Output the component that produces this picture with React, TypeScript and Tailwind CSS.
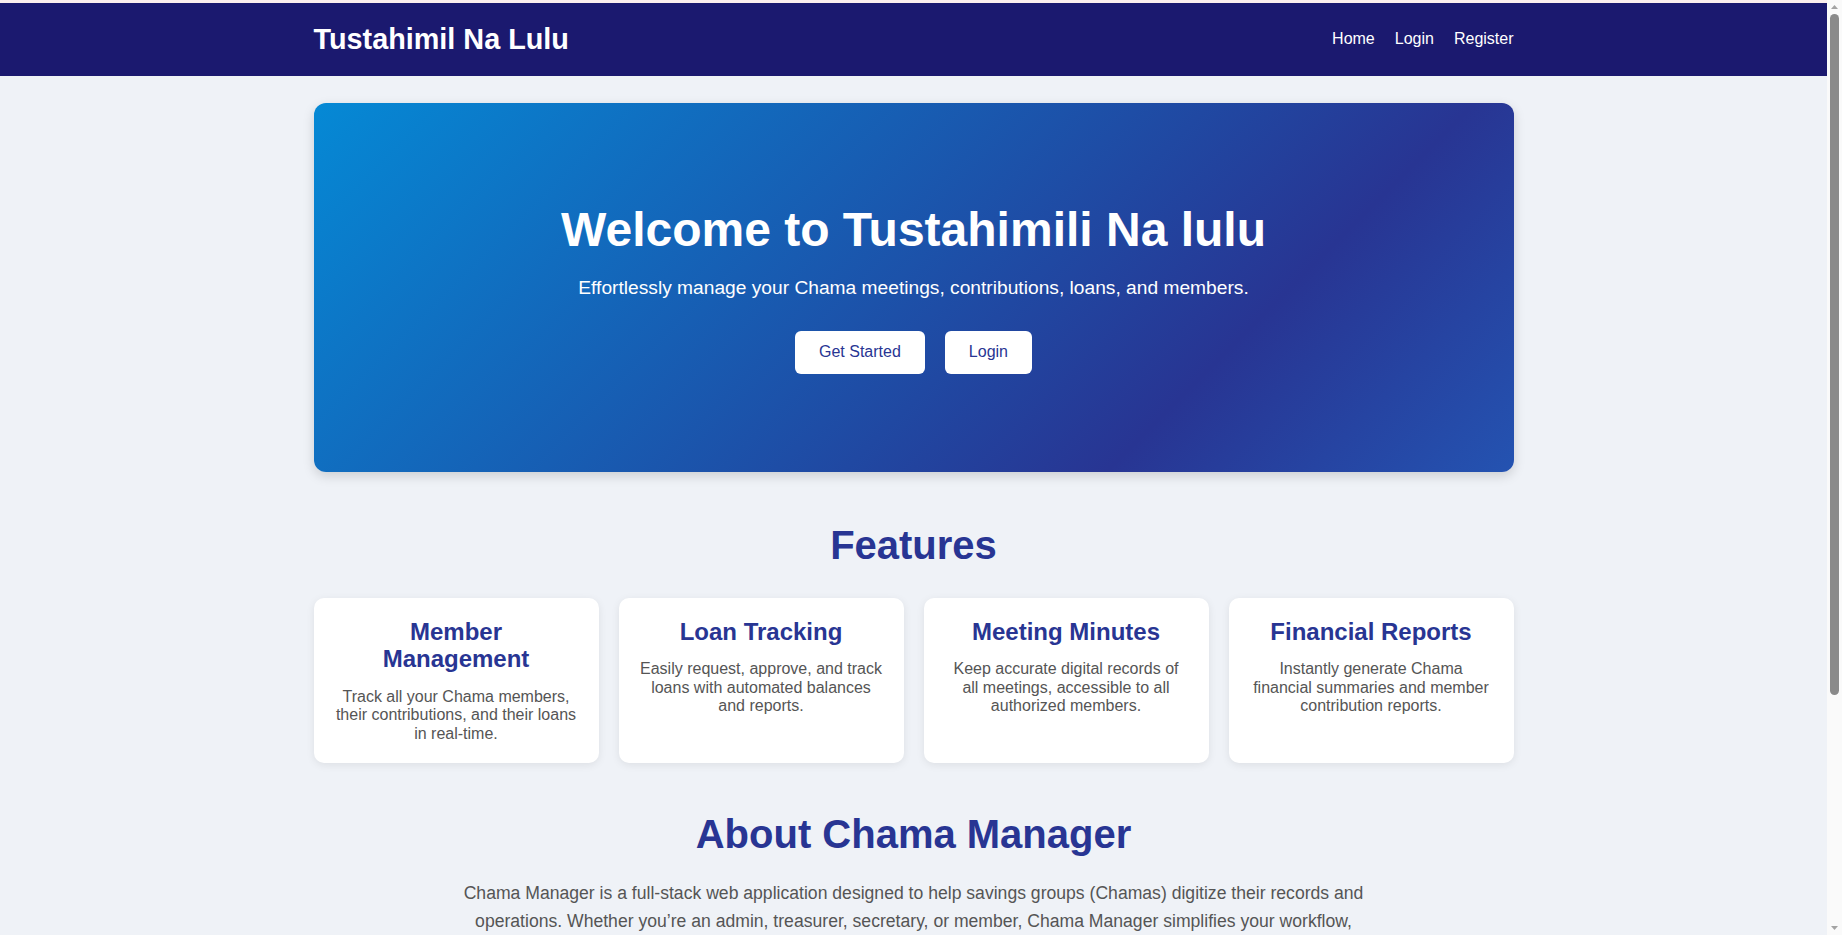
import React from 'react'

const features = [
  {
    title: 'Member Management',
    text: 'Track all your Chama members, their contributions, and their loans in real-time.',
  },
  {
    title: 'Loan Tracking',
    text: 'Easily request, approve, and track loans with automated balances and reports.',
  },
  {
    title: 'Meeting Minutes',
    text: 'Keep accurate digital records of all meetings, accessible to all authorized members.',
  },
  {
    title: 'Financial Reports',
    text: 'Instantly generate Chama financial summaries and member contribution reports.',
  },
]

function Scrollbar() {
  // fake classic scrollbar, the page runs past the bottom of the window
  return (
    <div className="w-[15px] shrink-0 bg-[#fafafa] flex flex-col items-center">
      <svg width="15" height="14" viewBox="0 0 15 14" className="shrink-0">
        <path d="M4 9 L7.5 5 L11 9 Z" fill="#a3a3a3" />
      </svg>
      <div className="w-[9px] h-[681px] rounded-full bg-[#8a8a8a]" />
      <div className="flex-1" />
      <svg width="15" height="14" viewBox="0 0 15 14" className="shrink-0">
        <path d="M4 5 L7.5 9 L11 5 Z" fill="#a3a3a3" />
      </svg>
    </div>
  )
}

export default function App() {
  return (
    <div className="h-screen flex overflow-hidden bg-[#eff2f7] font-['Liberation_Sans',Arial,sans-serif] leading-[1.15] text-[#333]">
      <div className="flex-1 min-w-0 overflow-hidden">
        <div className="h-[3px] bg-[#fbeeee]" />

        {/* Navbar */}
        <nav className="bg-[#1b196f] text-white">
          <div className="max-w-[1200px] mx-auto h-[73px] flex items-center justify-between">
            <span className="text-[28.8px] font-bold">Tustahimil Na Lulu</span>
            <div className="flex gap-5 text-[16px]">
              <a href="#">Home</a>
              <a href="#">Login</a>
              <a href="#">Register</a>
            </div>
          </div>
        </nav>

        <main className="max-w-[1200px] mx-auto">
          {/* Hero */}
          <section className="mt-[27px] rounded-xl text-white text-center pt-[99px] pb-[98px] shadow-[0_4px_12px_rgba(0,0,0,0.15)] bg-[linear-gradient(135deg,#0589d5_0%,#283593_74%,#2453b1_100%)]">
            <h1 className="text-[48px] font-bold">Welcome to Tustahimili Na lulu</h1>
            <p className="mt-5 text-[19.2px]">
              Effortlessly manage your Chama meetings, contributions, loans, and members.
            </p>
            <div className="mt-8 flex justify-center gap-5">
              <button className="bg-white text-[#283593] text-[16px] px-6 py-3 rounded-md">Get Started</button>
              <button className="bg-white text-[#283593] text-[16px] px-6 py-3 rounded-md">Login</button>
            </div>
          </section>

          {/* Features */}
          <section className="mt-[50px]">
            <h2 className="text-center text-[40px] font-bold text-[#283593]">Features</h2>
            <div className="mt-[30px] grid grid-cols-4 gap-5">
              {features.map((f) => (
                <div
                  key={f.title}
                  className="bg-white rounded-[10px] p-5 text-center shadow-[0_2px_8px_rgba(0,0,0,0.08)]"
                >
                  <h3 className="text-[24px] font-bold text-[#283593] mb-[15px]">{f.title}</h3>
                  <p className="text-[16px] text-[#555]">{f.text}</p>
                </div>
              ))}
            </div>
          </section>

          {/* About */}
          <section className="mt-[48px] pb-[60px]">
            <h2 className="text-center text-[40px] font-bold text-[#283593]">About Chama Manager</h2>
            <p className="mt-[22px] max-w-[910px] mx-auto text-center text-[17.6px] leading-[1.6] text-[#555]">
              Chama Manager is a full-stack web application designed to help savings groups (Chamas) digitize their records and
              operations. Whether you’re an admin, treasurer, secretary, or member, Chama Manager simplifies your workflow,
              automating contribution tracking, loan management, meeting records and financial reporting in one secure place.
            </p>
            <p className="mt-4 max-w-[910px] mx-auto text-center text-[17.6px] leading-[1.6] text-[#555]">
              Built for transparency and trust, it keeps every member informed and every shilling accounted for.
            </p>
          </section>
        </main>
      </div>

      <Scrollbar />
    </div>
  )
}
